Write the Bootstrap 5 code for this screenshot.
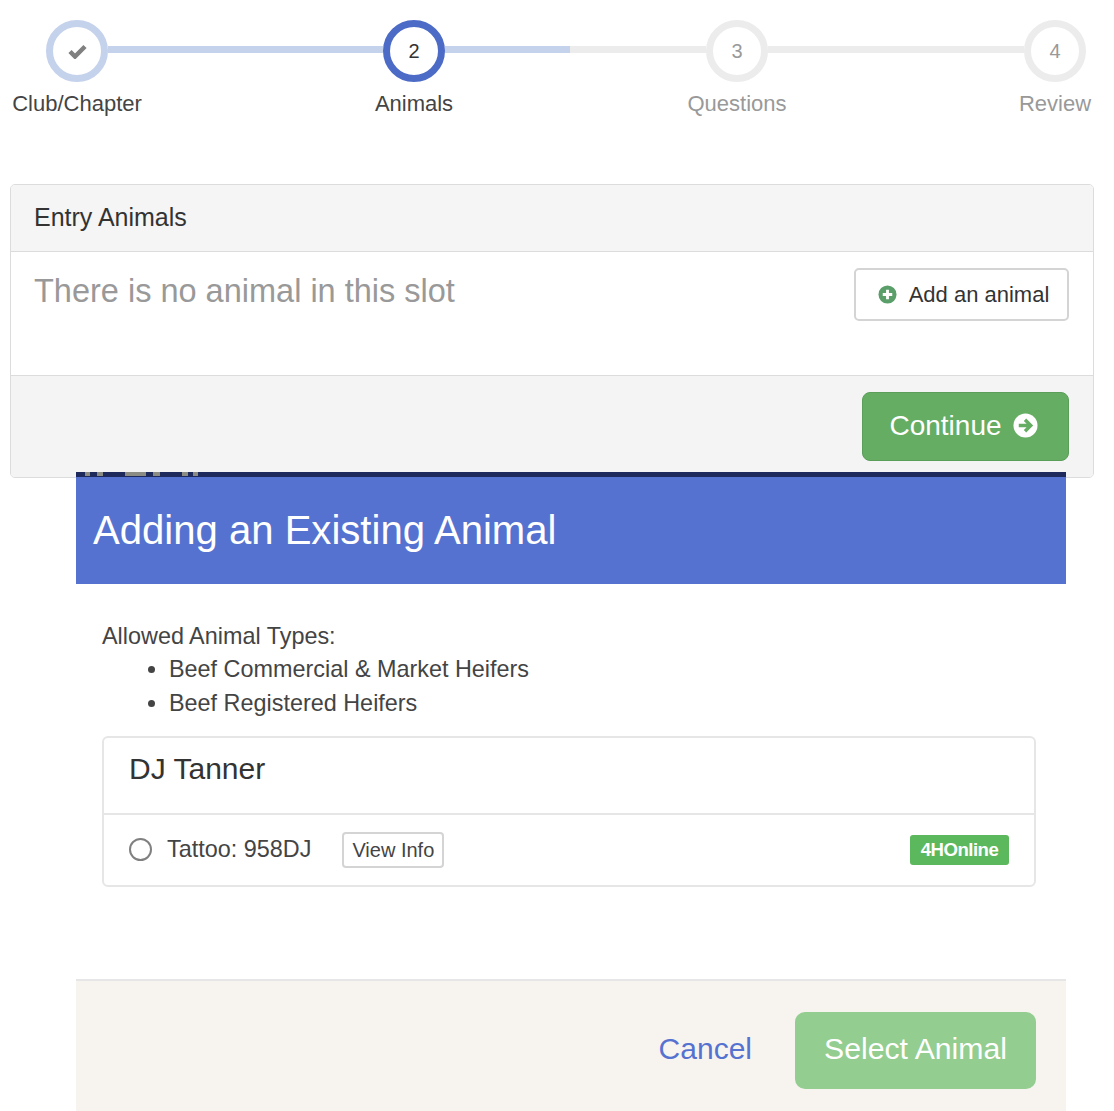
<!DOCTYPE html>
<html lang="en">
<head>
  <meta charset="UTF-8" />
  <meta name="viewport" content="width=device-width, initial-scale=1">
  <title>Adding an Existing Animal</title>
  <link href="https://cdn.jsdelivr.net/npm/bootstrap@5.3.3/dist/css/bootstrap.min.css" rel="stylesheet">
  <style>
    body {
      height: 1111px;
      overflow: hidden;
      background: #fff;
      color: #333;
      font-family: "Liberation Sans", Arial, sans-serif;
    }

    /* stepper */
    .stepper { padding: 20px 0 0 46px; height: 184px; }
    .step-col { width: 62px; flex: none; }
    .step-dot {
      width: 62px; height: 62px;
      border: 7px solid #ececec;
      color: #999;
      font-size: 20px;
      background: #fff;
    }
    .step-name { font-size: 22px; line-height: 24px; margin-top: 10px; white-space: nowrap; color: #999; }
    .step-done .step-dot { border-color: #c5d2ec; }
    .step-now .step-dot { border-color: #4c6bc6; color: #333; }
    .step-done .step-name, .step-now .step-name { color: #444; }
    .step-line { height: 7px; margin-top: 26px; flex: none; background: #ececec; }
    .line-a { width: 275px; background: #c5d2ec; }
    .line-b { width: 261px; background: linear-gradient(90deg, #c5d2ec 125px, #ececec 125px); }
    .line-c { width: 256px; }

    /* entry card */
    .entry-card { margin: 0 20px 0 10px; height: 294px; border: 1px solid #dcdcdc; border-radius: 5px; }
    .entry-head { height: 67px; padding: 0 23px; font-size: 25px; background: #f5f5f5; border-bottom: 1px solid #dcdcdc; color: #333; }
    .entry-body { height: 123px; padding: 16px 24px 0 23px; }
    .empty-slot { font-size: 32.500px; line-height: 46px; color: #999; }
    .btn-add {
      width: 215px; height: 53px;
      font-size: 22px;
      color: #333;
      background: #fff;
      border: 2px solid #d4d4d4;
      border-radius: 5px;
    }
    .entry-foot { height: 102px; padding: 16px 24px 0; background: #f4f4f4; border-top: 1px solid #dcdcdc; }
    .btn-go {
      width: 207px; height: 69px;
      padding: 0 4px 2px 0;
      font-size: 28px;
      color: #fff;
      background: #65ad63;
      border: 1px solid #5a9e59;
      border-radius: 8px;
    }
    .go-arrow { margin-left: 11px; }

    /* modal */
    .add-modal { margin: -6px 48px 0 76px; position: relative; background: #fff; height: 645px; }
    .modal-edge { height: 5px; background: #1f2a5c; }
    /* bits of the page behind the modal, showing through its top edge */
    .edge-bit { height: 4px; background: #8b8d84; flex: none; }
    .bit-1 { width: 5px; margin-left: 9px; }
    .bit-2 { width: 6px; margin-left: 7px; }
    .bit-3 { width: 21px; margin-left: 22px; }
    .bit-4 { width: 7px; margin-left: 7px; }
    .bit-5 { width: 6px; margin-left: 22px; }
    .bit-6 { width: 5px; margin-left: 5px; }
    .modal-title-bar { height: 107px; padding: 0 17px; background: #5572d0; color: #fff; font-size: 40.100px; }
    .modal-main { height: 395px; padding: 34px 30px 0 26px; font-size: 23.400px; color: #444; }
    .type-head { line-height: 36px; }
    .type-list { margin: -1px 0 16px; padding-left: 67px; line-height: 33.500px; }
    .animal-box { border: 2px solid #e6e6e6; border-radius: 6px; }
    .animal-name { height: 77px; padding: 12px 25px; font-size: 30px; line-height: 38px; color: #333; border-bottom: 2px solid #e6e6e6; }
    .animal-row { height: 70px; padding: 0 25px 1px; }
    .fake-radio { width: 23px; height: 23px; border: 2px solid #808080; border-radius: 50%; margin-right: 15px; }
    .btn-view {
      margin-left: 31px; width: 102px; height: 36px;
      padding: 0;
      font-size: 20px;
      color: #444;
      border: 2px solid #d4d4d4;
      border-radius: 4px;
    }
    .tag-green { width: 99px; height: 30px; font-size: 18.600px; font-weight: 700; letter-spacing: -.5px; color: #fff; background: #5cb85c; border-radius: 3px; }
    .modal-foot { height: 138px; padding: 31px 30px 0 0; background: #f7f4f0; border-top: 2px solid #e6e6e6; }
    .cancel-link { margin: 19px 43px 0 0; font-size: 30px; line-height: 36px; color: #5572d0; text-decoration: none; }
    .btn-select {
      width: 241px; height: 77px;
      padding: 0 0 3px;
      font-size: 30.200px;
      color: #fff;
      background: #93cd90;
      border: 0;
      border-radius: 10px;
    }
  </style>
</head>
<body>
  <div class="stepper d-flex align-items-start">
    <div class="step-col step-done d-flex flex-column align-items-center">
      <div class="step-dot rounded-circle d-flex align-items-center justify-content-center">
        <svg width="19" height="15" viewBox="0 0 19 15"><path d="M2 7.500l5 5L17 2.500" fill="none" stroke="#808080" stroke-width="4.500"/></svg>
      </div>
      <div class="step-name">Club/Chapter</div>
    </div>
    <div class="step-line line-a"></div>
    <div class="step-col step-now d-flex flex-column align-items-center">
      <div class="step-dot rounded-circle d-flex align-items-center justify-content-center">2</div>
      <div class="step-name">Animals</div>
    </div>
    <div class="step-line line-b"></div>
    <div class="step-col d-flex flex-column align-items-center">
      <div class="step-dot rounded-circle d-flex align-items-center justify-content-center">3</div>
      <div class="step-name">Questions</div>
    </div>
    <div class="step-line line-c"></div>
    <div class="step-col d-flex flex-column align-items-center">
      <div class="step-dot rounded-circle d-flex align-items-center justify-content-center">4</div>
      <div class="step-name">Review</div>
    </div>
  </div>

  <div class="entry-card overflow-hidden">
    <div class="entry-head d-flex align-items-center">Entry Animals</div>
    <div class="entry-body d-flex justify-content-between align-items-start">
      <div class="empty-slot">There is no animal in this slot</div>
      <button class="btn btn-add d-flex align-items-center justify-content-center ps-1 pe-0 py-0">
        <svg class="me-2" width="19" height="19" viewBox="0 0 20 20"><circle cx="10" cy="10" r="9.500" fill="#5a9e6a"/><path d="M10 5v10M5 10h10" stroke="#fff" stroke-width="3"/></svg>
        <span class="ms-1">Add an animal</span>
      </button>
    </div>
    <div class="entry-foot d-flex justify-content-end align-items-start">
      <button class="btn btn-go d-flex align-items-center justify-content-center">
        Continue
        <svg class="go-arrow" width="25" height="25" viewBox="0 0 26 26"><circle cx="13" cy="13" r="12.500" fill="#fff"/><path d="M6 13h12M12.500 7l6 6-6 6" fill="none" stroke="#65ad63" stroke-width="3.500"/></svg>
      </button>
    </div>
  </div>

  <div class="add-modal">
    <div class="modal-edge d-flex">
      <span class="edge-bit bit-1"></span><span class="edge-bit bit-2"></span><span class="edge-bit bit-3"></span><span class="edge-bit bit-4"></span><span class="edge-bit bit-5"></span><span class="edge-bit bit-6"></span>
    </div>
    <div class="modal-title-bar d-flex align-items-center">Adding an Existing Animal</div>
    <div class="modal-main">
      <div class="type-head">Allowed Animal Types:</div>
      <ul class="type-list">
        <li>Beef Commercial &amp; Market Heifers</li>
        <li>Beef Registered Heifers</li>
      </ul>
      <div class="animal-box">
        <div class="animal-name">DJ Tanner</div>
        <div class="animal-row d-flex align-items-center">
          <span class="fake-radio"></span>
          <span>Tattoo: 958DJ</span>
          <button class="btn btn-view">View Info</button>
          <span class="tag-green ms-auto d-flex align-items-center justify-content-center">4HOnline</span>
        </div>
      </div>
    </div>
    <div class="modal-foot d-flex justify-content-end align-items-start">
      <a class="cancel-link" href="#">Cancel</a>
      <button class="btn btn-select">Select Animal</button>
    </div>
  </div>
  <script src="https://cdn.jsdelivr.net/npm/bootstrap@5.3.3/dist/js/bootstrap.bundle.min.js"></script>
</body>
</html>
